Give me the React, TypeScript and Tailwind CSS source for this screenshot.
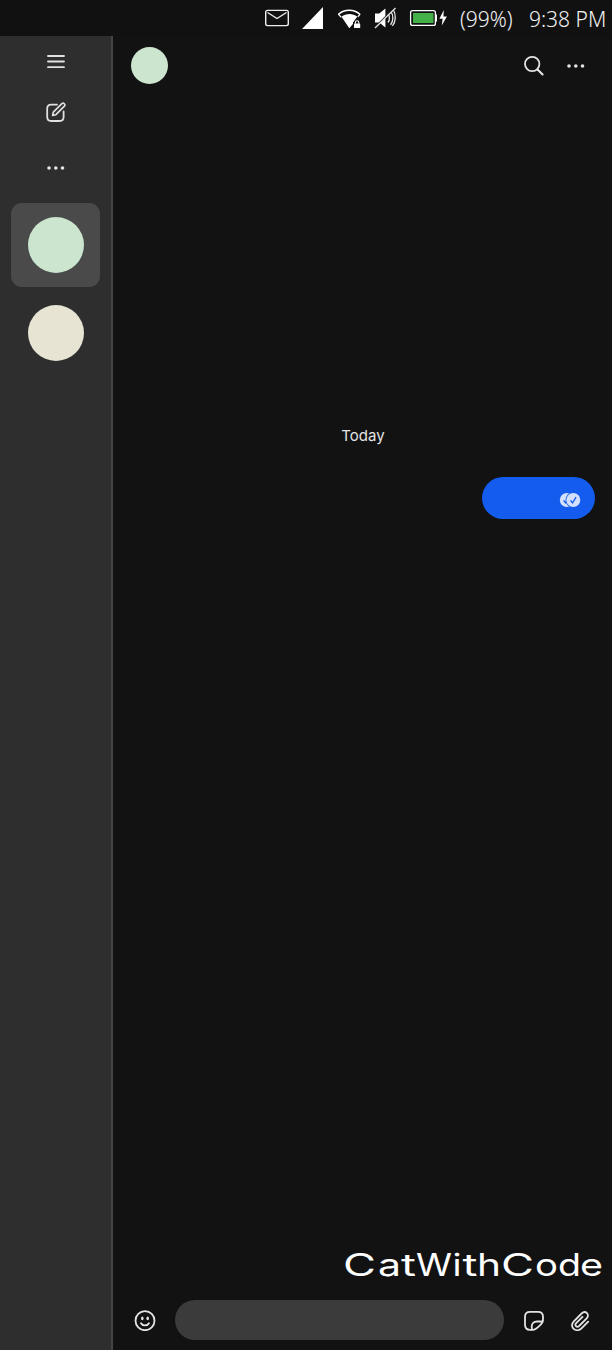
import React from "react";

function StatusBar() {
  return (
    <header className="flex h-9 shrink-0 items-center bg-[#111111] pl-[264px] text-[#f2f2f2]">
      <svg width="188" height="36" viewBox="264 0 188 36" fill="none" className="shrink-0">
        <rect x="265.7" y="10.4" width="22.6" height="15.2" rx="1.8" stroke="#eee" strokeWidth="1.4" />
        <path d="M267.5 12.5l9.5 6 9.5-6" stroke="#eee" strokeWidth="1.4" />
        <path d="M323 7v22h-21z" fill="#fff" />
        <path d="M338.5 14.2c6-5.3 15.4-5.3 21.4 0" stroke="#fff" strokeWidth="1.5" />
        <path d="M338.3 14l3 3.4M360.2 14l-2.4 2.8" stroke="#fff" strokeWidth="1.2" />
        <path d="M341.5 16.8c4.7-3.6 11.2-3.6 15.8 0L354 21l-1.1 3-3.6 4.2z" fill="#fff" />
        <path d="M353 22h8v7h-8z" fill="#111" />
        <rect x="354" y="23.4" width="6.2" height="4.6" rx=".6" fill="#fff" />
        <path d="M355.4 23.8v-1.4a1.7 1.7 0 0 1 3.4 0v1.4" stroke="#fff" strokeWidth="1.1" />
        <path d="M375 13.5h4.3l6.1-5v19l-6.1-5H375z" fill="#fff" />
        <path d="M388 13.5c1.9 2.5 1.9 6.5 0 9M390.6 11.2c3 4 3 9.6 0 13.6M393.2 9.5c3 5 2.8 12-.8 16.4" stroke="#e8e8e8" strokeWidth="1.3" />
        <path d="M394 8.5L375.2 27" stroke="#111" strokeWidth="1.5" />
        <path d="M395.5 8L375 28" stroke="#ddd" strokeWidth="1.4" />
        <rect x="410.6" y="10.6" width="24.8" height="14.8" rx="2" stroke="#fff" strokeWidth="1.3" />
        <rect x="413" y="13" width="20.5" height="10" fill="#43b04a" />
        <path d="M436.2 14.5v7" stroke="#fff" strokeWidth="1.6" />
        <path d="M443.8 10l-4.4 8.7h3.2l-.8 6.8 5.1-9h-3.5z" fill="#fff" />
      </svg>
      <div className="ml-[8px] w-[54px] shrink-0 pt-px">
        <span className="inline-block whitespace-nowrap font-['Noto_Sans',sans-serif] text-[21px] leading-9 font-light">(99%)</span>
      </div>
      <div className="ml-[15px] w-[80px] shrink-0 pt-px">
        <span className="inline-block whitespace-nowrap font-['Noto_Sans',sans-serif] text-[21px] leading-9 font-light">9:38 PM</span>
      </div>
    </header>
  );
}

function Dots() {
  return (
    <svg width="18" height="6" viewBox="0 0 18 6" fill="#e4e4e4">
      <circle cx="2" cy="3" r="1.8" />
      <circle cx="8.8" cy="3" r="1.8" />
      <circle cx="15.5" cy="3" r="1.8" />
    </svg>
  );
}

function Sidebar() {
  return (
    <aside className="flex w-[113px] shrink-0 flex-col items-center border-r-2 border-[#444444] bg-[#2e2e2e]">
      <button aria-label="Menu" className="mt-[18px] flex h-4 items-center">
        <svg width="18" height="16" viewBox="0 0 18 16" stroke="#e0e0e0" strokeWidth="1.8" strokeLinecap="round">
          <path d="M1 2h16M1 7.5h16M1 13.2h16" />
        </svg>
      </button>
      <button aria-label="New chat" className="mt-[31px] flex">
        <svg width="22" height="22" viewBox="0 0 22 22" fill="none" stroke="#e0e0e0" strokeWidth="1.8" strokeLinecap="round" strokeLinejoin="round">
          <path d="M12 3.6H6.2c-2.7 0-4 1.3-4 4V16c0 2.7 1.3 4 4 4h8.4c2.7 0 4-1.3 4-4v-5.5" />
          <path d="M7.7 14.5l.6-3.3 8.6-8.5c1.5-1.5 4.1.8 2.5 2.5l-8.5 8.5z" strokeWidth="1.7" />
        </svg>
      </button>
      <button aria-label="More" className="mt-[42px] flex">
        <Dots />
      </button>
      <div className="mt-[32px] flex h-[84px] w-[89px] items-center justify-center rounded-[11px] bg-[#4a4a4a] pb-px">
        <div className="size-14 rounded-full bg-[#cce5cf]" />
      </div>
      <div className="mt-[17.5px] size-14 rounded-full bg-[#e8e4d4]" />
    </aside>
  );
}

function Receipt() {
  return (
    <svg width="22" height="16" viewBox="0 0 22 16" fill="none">
      <circle cx="7.8" cy="8" r="7" fill="#d2dffd" />
      <path d="M4.6 8.3l2 2.6 3-5" stroke="#145cee" strokeWidth="1.3" />
      <circle cx="14.3" cy="8" r="7.8" fill="#145cee" />
      <circle cx="14.3" cy="8" r="7" fill="#d2dffd" />
      <path d="M11.5 8.3l2 2.5 3.6-5.6" stroke="#145cee" strokeWidth="1.3" />
    </svg>
  );
}

const wordmark: [string, number, number][] = [
  ["C", 0, 33],
  ["a", 35, 23],
  ["t", 58, 15],
  ["W", 73, 36],
  ["i", 109.5, 9],
  ["t", 119.5, 15],
  ["h", 134, 24],
  ["C", 158, 33],
  ["o", 192, 23],
  ["d", 215, 23],
  ["e", 237, 23],
];

function Wordmark() {
  return (
    <svg width="268" height="42" viewBox="0 0 268 42" className="block">
      <text y="33" fill="#fff" className="font-['Inter',sans-serif] text-[31px] font-normal">
        {wordmark.map(([letter, x, width], i) => (
          <tspan key={i} x={x} textLength={width} lengthAdjust="spacingAndGlyphs">{letter}</tspan>
        ))}
      </text>
    </svg>
  );
}

function Composer() {
  return (
    <footer className="flex h-[40px] items-center">
      <svg className="ml-[21px] shrink-0" width="22" height="22" viewBox="0 0 22 22" fill="none" stroke="#e4e4e4" strokeWidth="1.8" strokeLinecap="round">
        <circle cx="11" cy="11.7" r="9.5" />
        <path d="M7 14.2c1.7 3 6.3 3 8 0" />
        <ellipse cx="8.3" cy="9.4" rx="1.3" ry="1.8" fill="#e4e4e4" stroke="none" />
        <ellipse cx="13.7" cy="9.4" rx="1.3" ry="1.8" fill="#e4e4e4" stroke="none" />
      </svg>
      <div className="ml-[19px] h-[40px] w-[329px] shrink-0 rounded-full bg-[#3b3b3b]" />
      <svg className="ml-[19px] shrink-0" width="22" height="22" viewBox="0 0 22 22" fill="none" stroke="#e4e4e4" strokeWidth="1.8" strokeLinecap="round" strokeLinejoin="round">
        <path d="M9 20.8H7c-3.4 0-5-1.8-5-5v-8c0-3.4 1.7-5 5-5h8c3.4 0 5 1.7 5 5v3.5c0 3-7 9.5-10 9.5-1.3 0-1.3-1.3-1.3-3 0-3.5 2-5.3 5.5-5.3H19" />
      </svg>
      <svg className="ml-[24px] shrink-0" width="22" height="22" viewBox="0 0 22 22" fill="none" stroke="#e4e4e4" strokeWidth="1.8" strokeLinecap="round" strokeLinejoin="round">
        <path d="M19.2 12.6l-6.7 6.7c-5.2 5.1-13-1.4-7.7-7l7.8-7.8c3.9-3.8 8.7 1.2 5.1 4.8l-7.6 7.7c-2.4 2.2-4.9-.7-2.9-2.8l6.3-6.3" />
      </svg>
    </footer>
  );
}

function Chat() {
  return (
    <main className="flex min-w-0 flex-1 flex-col bg-[#121212]">
      <div className="flex h-[60px] items-center pr-[27px] pl-[18px]">
        <div className="mb-px size-[37px] rounded-full bg-[#cce5cf]" />
        <svg className="ml-auto" width="22" height="22" viewBox="0 0 22 22" fill="none" stroke="#e4e4e4" strokeLinecap="round">
          <circle cx="9.2" cy="9" r="7.2" strokeWidth="1.8" />
          <path d="M14.5 14.4l5.1 5.1" strokeWidth="2.1" />
        </svg>
        <div className="ml-[22px]">
          <Dots />
        </div>
      </div>
      <div className="mt-[330px] pl-px text-center font-['Inter',sans-serif] text-[15px] leading-5 text-[#e4e4e4]">Today</div>
      <div className="mt-[31px] mr-[17px] flex h-[42px] w-[113px] items-center justify-end self-end rounded-full bg-[#145cee] pt-[4px] pr-[14px]">
        <Receipt />
      </div>
      <div className="mt-auto mr-px mb-[15px] self-end">
        <Wordmark />
      </div>
      <Composer />
      <div className="h-[10px]" />
    </main>
  );
}

export default function App() {
  return (
    <div className="flex h-[1350px] w-[612px] flex-col overflow-hidden bg-[#121212]">
      <StatusBar />
      <div className="flex min-h-0 flex-1">
        <Sidebar />
        <Chat />
      </div>
    </div>
  );
}
